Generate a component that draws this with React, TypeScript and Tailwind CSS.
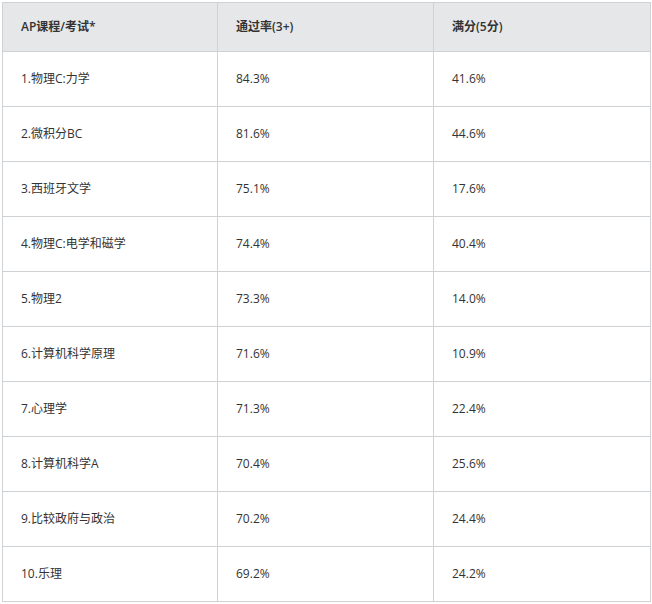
import React from 'react';

const rows: [string, string, string][] = [
  ['1.物理C:力学', '84.3%', '41.6%'],
  ['2.微积分BC', '81.6%', '44.6%'],
  ['3.西班牙文学', '75.1%', '17.6%'],
  ['4.物理C:电学和磁学', '74.4%', '40.4%'],
  ['5.物理2', '73.3%', '14.0%'],
  ['6.计算机科学原理', '71.6%', '10.9%'],
  ['7.心理学', '71.3%', '22.4%'],
  ['8.计算机科学A', '70.4%', '25.6%'],
  ['9.比较政府与政治', '70.2%', '24.4%'],
  ['10.乐理', '69.2%', '24.2%'],
];

const App: React.FC = () => {
  return (
    <div className="min-h-screen bg-white p-[2px] text-[12px] text-[#333] font-['Open_Sans','Noto_Sans_CJK_SC',sans-serif]">
      <table className="w-[648px] table-fixed border-collapse">
        <colgroup>
          <col className="w-[215px]" />
          <col className="w-[216px]" />
          <col className="w-[217px]" />
        </colgroup>
        <thead>
          <tr className="h-[49px] bg-[#e6e7e9]">
            <th className="border border-[#cfd2d4] pl-[18px] text-left font-semibold">AP课程/考试*</th>
            <th className="border border-[#cfd2d4] pl-[18px] text-left font-semibold">通过率(3+)</th>
            <th className="border border-[#cfd2d4] pl-[18px] text-left font-semibold">满分(5分)</th>
          </tr>
        </thead>
        <tbody>
          {rows.map(([name, pass, full]) => (
            <tr key={name} className="h-[55px]">
              <td className="border border-[#cfd2d4] pl-[18px]">{name}</td>
              <td className="border border-[#cfd2d4] pl-[18px]">{pass}</td>
              <td className="border border-[#cfd2d4] pl-[18px]">{full}</td>
            </tr>
          ))}
        </tbody>
      </table>
    </div>
  );
};

export default App;
